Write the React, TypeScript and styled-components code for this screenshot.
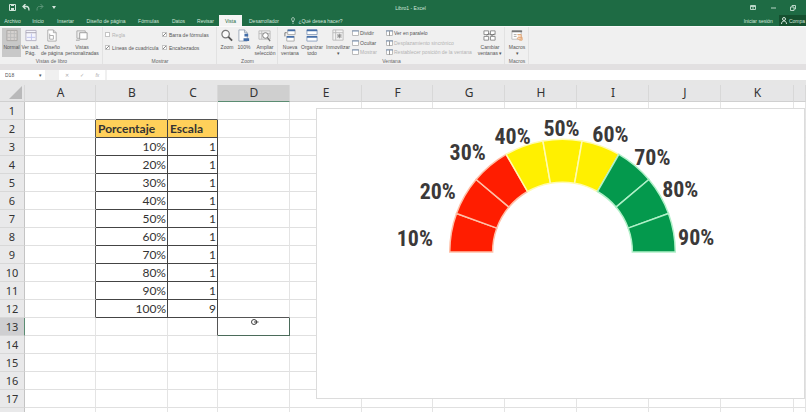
import React from 'react';
import styled, { createGlobalStyle, css } from 'styled-components';

const GlobalStyle = createGlobalStyle`
  * { box-sizing: border-box; }
  body { margin: 0; background: #e6e6e6; font-family: "Liberation Sans", Arial, sans-serif; overflow: hidden; }
  button, input { font: inherit; color: inherit; margin: 0; padding: 0; border: 0; background: none; }
`;

const Window = styled.div`
  display: flex;
  flex-direction: column;
  height: 100vh;
  overflow: hidden;
  font-size: 5px;
  line-height: 6px;
  color: #555;
`;

const TitleBar = styled.header`
  display: grid;
  grid-template-columns: 1fr auto 1fr;
  align-items: center;
  height: 15px;
  padding: 0 8px 0 7px;
  background: #1e6b44;
  color: #d4e6dc;
`;

const DocumentTitle = styled.span`
  padding-left: 16px;
`;

const QuickAccess = styled.div`
  display: flex;
  gap: 4px;
`;

const WindowControls = styled.div`
  display: flex;
  justify-content: flex-end;
  gap: 10px;
`;

const BarButton = styled.button<{ $faded?: boolean }>`
  display: flex;
  width: 10px;
  height: 10px;
  align-items: center;
  justify-content: center;
  opacity: ${p => (p.$faded ? 0.35 : 1)};
`;

const TabBar = styled.nav`
  display: flex;
  height: 11px;
  background: #1e6b44;
  color: #d4e6dc;
`;

const TabList = styled.div`
  display: grid;
  grid-template-columns: 25px 26px 29px 52px 33px 27px 27px 23px 44px 62px;
`;

const Tab = styled.button<{ $active?: boolean }>`
  display: flex;
  align-items: center;
  justify-content: center;
  gap: 3px;
  white-space: nowrap;
  ${p => p.$active && css`background: #f4f4f4; color: #1e6b44;`}
`;

const Account = styled.div`
  display: flex;
  margin-left: auto;
  gap: 6px;
`;

const Share = styled.button`
  display: flex;
  align-items: center;
  gap: 2px;
  padding: 0 1px 0 2px;
  background: #15502f;
  white-space: nowrap;
`;

const Ribbon = styled.section`
  display: flex;
  height: 38px;
  flex: none;
  background: #f0f0f0;
  border-top: 1px solid #fafafa;
`;

const Group = styled.div<{ $width: number }>`
  display: flex;
  flex-direction: column;
  justify-content: space-between;
  width: ${p => p.$width}px;
  padding: 1px 1px 0 2px;
  border-right: 1px solid #e2e2e2;
`;

const GroupBody = styled.div`
  display: flex;
  height: 29px;
`;

const GroupLabel = styled.div`
  text-align: center;
  color: #666;
`;

const Command = styled.button<{ $width: number; $active?: boolean }>`
  display: flex;
  flex: none;
  flex-direction: column;
  align-items: center;
  width: ${p => p.$width}px;
  height: 29px;
  padding-top: 1px;
  background: ${p => (p.$active ? '#c8c8c8' : 'transparent')};
  white-space: pre;

  svg { flex: none; margin-bottom: 2px; }
`;

const CheckGrid = styled.div`
  display: grid;
  grid-template-columns: 57px 50px;
  grid-template-rows: 13px 13px;
  align-items: center;
`;

const CheckLabel = styled.label<{ $off?: boolean }>`
  display: flex;
  align-items: center;
  gap: 2px;
  white-space: nowrap;
  color: ${p => (p.$off ? '#b5b5b5' : '#555')};
`;

const CheckBox = styled.input`
  appearance: none;
  width: 5px;
  height: 5px;
  border: 1px solid #c4c4c4;
  background: #fff;
  &:checked { background: linear-gradient(135deg, #fff 40%, #888 50%, #fff 65%); }
`;

const SmallList = styled.div<{ $width: number }>`
  display: flex;
  flex: none;
  flex-direction: column;
  width: ${p => p.$width}px;
`;

const SmallCommand = styled.button`
  display: flex;
  align-items: center;
  gap: 1px;
  height: 10px;
  white-space: nowrap;
  &:disabled { color: #b3b3b3; }
`;

const RibbonEdge = styled.div`
  height: 6px;
  flex: none;
  background: #e2e0e1;
`;

const FormulaBar = styled.div`
  display: flex;
  flex: none;
  height: 10px;
  background: #f0f0f0;
`;

const NameBox = styled.div`
  display: flex;
  align-items: center;
  width: 45px;
  padding: 0 3px 0 5px;
  background: #fff;
`;

const NameInput = styled.input`
  width: 34px;
`;

const FormulaTools = styled.div`
  display: flex;
  align-items: center;
  justify-content: space-around;
  width: 46px;
  margin: 0 2px 0 14px;
  background: #fff;
  color: #aaa;
`;

const FormulaInput = styled.input`
  flex: 1;
  padding: 0 4px;
  background: #fff;
`;

const Sheet = styled.main`
  position: relative;
  flex: 1;
  padding-top: 5px;
  overflow: hidden;
  background: #e6e6e6;
`;

const Grid = styled.table`
  table-layout: fixed;
  width: 100%;
  border-collapse: separate;
  border-spacing: 0;
  background: #fff;
  font: 12px/16px "Noto Sans", sans-serif;
  color: #333;
`;

const Col = styled.col<{ $width?: number }>`
  width: ${p => (p.$width ? `${p.$width}px` : 'auto')};
`;

const ColumnHead = styled.th<{ $selected?: boolean }>`
  height: 17px;
  padding: 0 0 0 1px;
  border-right: 1px solid #d8d8d8;
  border-bottom: 1px solid ${p => (p.$selected ? '#5b8c72' : '#d0d0d0')};
  background: ${p => (p.$selected ? '#cfcfcf' : '#e6e6e7')};
  font-weight: 400;
`;

const Corner = styled(ColumnHead)`
  text-align: right;
  svg { display: block; margin-left: auto; }
`;

const RowHead = styled.th<{ $selected?: boolean }>`
  height: 18px;
  padding: 0;
  border-right: 1px solid ${p => (p.$selected ? '#5b8c72' : '#c4c4c4')};
  border-bottom: 1px solid #d8d8d8;
  background: ${p => (p.$selected ? '#cfcfd1' : '#e9e9ea')};
  font-size: 11px;
  font-weight: 400;
`;

type CellKind = 'plain' | 'title' | 'value' | 'selected';

const Cell = styled.td<{ $kind: CellKind; $edge?: boolean; $above?: boolean }>`
  height: 18px;
  padding: 0 1px 0 2px;
  border-right: 1px solid #e4e4e4;
  border-bottom: 1px solid #e0e0e0;
  font-family: Lato, sans-serif;
  ${p => (p.$kind === 'title' || p.$kind === 'value') && css`
    border-color: #444;
    text-align: right;
  `}
  ${p => p.$kind === 'title' && css`
    background: #ffd05a;
    font-weight: 700;
    text-align: left;
  `}
  ${p => p.$kind === 'selected' && css`
    border-color: #4b6b5a;
    vertical-align: top;
    svg { display: block; margin: 0 auto; }
  `}
  ${p => p.$edge && css`border-right-color: #555;`}
  ${p => p.$above && css`border-bottom-color: #555;`}
`;

const ChartPanel = styled.figure`
  position: absolute;
  top: 28px;
  left: 316px;
  right: 1px;
  height: 291px;
  margin: 0;
  border: 1px solid #dcdcdc;
  background: #fff;

  svg { display: block; width: 100%; height: 100%; }
`;

const GaugeLabel = styled.text`
  font: 700 22px "Roboto Condensed", Roboto, sans-serif;
  fill: #3b3939;
  text-anchor: middle;
`;

type IconName =
  | 'normal' | 'breaks' | 'page' | 'custom' | 'zoom' | 'hundred' | 'fit'
  | 'newWindow' | 'arrange' | 'freeze' | 'switch' | 'macros';

const iconShapes: Record<IconName, React.ReactNode> = {
  normal: <><path d="M2 1.5h11v11H2z" fill="#d6d2d0" stroke="#aaa6a4" /><path d="M2 5h11M2 9h11M6 2v10M10 2v10" stroke="#bbb" /></>,
  breaks: <><path d="M2 1.5h11v11H2z" fill="#f5f5fc" stroke="#b5b2c2" /><path d="M2 4h11" stroke="#a3a0b0" /><path d="M3 9h9M8 5v7" stroke="#c0c4ee" /></>,
  page: <><path d="M3 1h6l3 3v9H3z" fill="#fff" stroke="#aaa" /><path d="M9 1v3h3M5 5v6M5 7h4v4H5" stroke="#aaa" fill="none" /></>,
  custom: <><path d="M2 2h9v8H2z" fill="#eee" stroke="#aaa" /><path d="M5 4h8v7H5z" fill="#fff" stroke="#999" /><path d="M1 12h4" stroke="#999" /></>,
  zoom: <><circle cx="6" cy="5.5" r="4" fill="#fafafa" stroke="#777" strokeWidth="1.3" /><path d="M9 8.5l4 4" stroke="#555" strokeWidth="2" /></>,
  hundred: <><path d="M2 1h6l3 3v9H2z" fill="#fff" stroke="#9aa8b8" /><path d="M8 5h4v3H8zM7 10h6v3H7z" fill="#456fa9" /><path d="M8 1v3h3" fill="none" stroke="#9aa8b8" /></>,
  fit: <><path d="M1 2h12v9H1zM4 2v9M1 5h12" fill="#eee" stroke="#bbb" /><circle cx="8" cy="7" r="3" fill="#fff" stroke="#777" /><path d="M10 9l3 4" stroke="#777" strokeWidth="1.4" /></>,
  newWindow: <><path d="M5 1h8v5H5zM4 8h8v5H4z" fill="#fff" stroke="#aaa" /><path d="M5 1.5h8M4 8.5h8" stroke="#456fa9" strokeWidth="2" /><path d="M2 8V4h2" fill="none" stroke="#777" /></>,
  arrange: <><path d="M2 1h11v5H2zM2 8h11v5H2z" fill="#fff" stroke="#8aa0bd" /><path d="M2 1.5h11M2 8.5h11" stroke="#456fa9" strokeWidth="2" /></>,
  freeze: <><path d="M2 1h11v11H2zM2 4h11M5 1v11" fill="#f4f4f4" stroke="#bbb" /><path d="M9 5v5M6.5 7.5h5M7 5.5l4 4M11 5.5l-4 4" stroke="#888" /></>,
  switch: <><path d="M1 2h5v4H1zM8 2h5v4H8zM1 8h5v4H1zM8 8h5v4H8z" fill="#fff" stroke="#888" /><path d="M4 7c3-5 5 3 8-2" fill="none" stroke="#666" /></>,
  macros: <><path d="M2 2h10v9H2z" fill="#fff" stroke="#bbb" /><path d="M2 2.5h11" stroke="#777" strokeWidth="2" /><path d="M4 6h3M4 8h3" stroke="#aaa" /><path d="M8 6h4v5H9c-2 0-1-2 0-2h4v3h-3" fill="#fbe5d4" stroke="#e2a36f" /></>,
};

const Icon = ({ name }: { name: IconName }) => (
  <svg width="14" height="13" viewBox="0 0 15 14" aria-hidden="true">{iconShapes[name]}</svg>
);

const WindowGlyph = ({ wide }: { wide?: boolean }) => (
  <svg width="7" height="6" viewBox="0 0 7 6" aria-hidden="true">
    <path d="M.5.5h6v5h-6z" fill="#fff" stroke="#bbb" />
    <path d="M0 1h7" stroke="#7a94b5" />
    {wide && <path d="M3.5 1v5" stroke="#999" />}
  </svg>
);

const columns = [
  ['A', 71], ['B', 72], ['C', 50], ['D', 72], ['E', 72], ['F', 71], ['G', 72],
  ['H', 72], ['I', 72], ['J', 72], ['K', 73], ['', 0],
] as const;

const data: Record<number, [string, string]> = {
  2: ['Porcentaje', 'Escala'], 3: ['10%', '1'], 4: ['20%', '1'], 5: ['30%', '1'],
  6: ['40%', '1'], 7: ['50%', '1'], 8: ['60%', '1'], 9: ['70%', '1'],
  10: ['80%', '1'], 11: ['90%', '1'], 12: ['100%', '9'],
};

const tabs = ['Archivo', 'Inicio', 'Insertar', 'Diseño de página', 'Fórmulas', 'Datos', 'Revisar', 'Vista', 'Desarrollador'];

const CellPointer = () => (
  <svg width="9" height="8" viewBox="0 0 9 8" aria-hidden="true">
    <circle cx="4" cy="4" r="2.5" fill="#fff" stroke="#444" />
    <path d="M4 4h4.5M6.5 2.5v3" stroke="#444" />
  </svg>
);

const SheetCell = ({ row, column }: { row: number; column: string }) => {
  const inTable = column === 'B' || column === 'C';
  if (inTable && data[row]) {
    return <Cell $kind={row === 2 ? 'title' : 'value'}>{data[row][column === 'B' ? 0 : 1]}</Cell>;
  }
  if (column === 'D' && row === 13) {
    return <Cell $kind="selected"><CellPointer /></Cell>;
  }
  return (
    <Cell
      $kind="plain"
      $edge={(column === 'A' && row > 1 && row < 13) || (column === 'C' && row === 13)}
      $above={(inTable && row === 1) || (column === 'D' && row === 12)}
    />
  );
};

const center = { x: 246, y: 143 };
const point = (radius: number, degrees: number) => {
  const a = (degrees * Math.PI) / 180;
  return `${(center.x - radius * Math.cos(a)).toFixed(2)} ${(center.y - radius * Math.sin(a)).toFixed(2)}`;
};
const slicePath = (i: number) =>
  `M${point(113, i * 20)}A113 113 0 0 1 ${point(113, i * 20 + 20)}L${point(70, i * 20 + 20)}A70 70 0 0 0 ${point(70, i * 20)}Z`;

const zones = [
  { fill: '#ff1d00', line: '#ffc0a8' },
  { fill: '#fff000', line: '#fffbb0' },
  { fill: '#04994d', line: '#b0f0c8' },
];

const gaugeLabels: [string, number, number][] = [
  ['10%', 98, 137], ['20%', 121, 90], ['30%', 151, 51], ['40%', 196, 35], ['50%', 245, 27],
  ['60%', 294, 33], ['70%', 336, 56], ['80%', 364, 88], ['90%', 380, 136],
];

const Gauge = () => (
  <svg viewBox="0 0 488 289" role="img" aria-label="Velocímetro">
    {Array.from({ length: 9 }, (_, i) => {
      const zone = zones[Math.floor(i / 3)];
      return <path key={i} d={slicePath(i)} fill={zone.fill} stroke={zone.line} strokeWidth="1.5" />;
    })}
    {gaugeLabels.map(([label, x, y]) => <GaugeLabel key={label} x={x} y={y}>{label}</GaugeLabel>)}
  </svg>
);

export default function App() {
  return (
    <Window>
      <GlobalStyle />
      <TitleBar>
        <QuickAccess>
          <BarButton aria-label="Guardar">
            <svg width="7" height="7" viewBox="0 0 7 7"><path d="M.5.5h6v6h-6z" fill="none" stroke="#d4e6dc" /><path d="M2 4h3v3H2zM2 1h3v1H2z" fill="#d4e6dc" /></svg>
          </BarButton>
          <BarButton aria-label="Deshacer">
            <svg width="8" height="7" viewBox="0 0 8 7"><path d="M3.5 0L1 2.5 3.5 5M1 2.5h3.5c2 0 2.5 1 2.5 4" fill="none" stroke="#d4e6dc" strokeWidth="1.3" /></svg>
          </BarButton>
          <BarButton aria-label="Rehacer" $faded>
            <svg width="8" height="7" viewBox="0 0 8 7"><path d="M4.5 0L7 2.5 4.5 5M7 2.5H3.5C1.5 2.5 1 3.5 1 6.5" fill="none" stroke="#d4e6dc" /></svg>
          </BarButton>
          <BarButton aria-label="Personalizar">
            <svg width="4" height="3" viewBox="0 0 4 3"><path d="M0 0h4L2 3z" fill="#d4e6dc" /></svg>
          </BarButton>
        </QuickAccess>
        <DocumentTitle>Libro1 - Excel</DocumentTitle>
        <WindowControls>
          <BarButton aria-label="Opciones de la cinta">
            <svg width="6" height="5" viewBox="0 0 6 5"><path d="M.5.5h5v4h-5zM0 1.5h6M3 2v2" fill="none" stroke="#b9d6c7" /></svg>
          </BarButton>
          <BarButton aria-label="Minimizar">
            <svg width="5" height="2" viewBox="0 0 5 2"><path d="M0 1h5" stroke="#b9d6c7" /></svg>
          </BarButton>
          <BarButton aria-label="Restaurar">
            <svg width="6" height="6" viewBox="0 0 6 6"><path d="M.5 2h3.5v3.5H.5zM2 2V.5h3.5V4H4" fill="none" stroke="#b9d6c7" /></svg>
          </BarButton>
        </WindowControls>
      </TitleBar>

      <TabBar>
        <TabList>
          {tabs.map(name => <Tab key={name} $active={name === 'Vista'}>{name}</Tab>)}
          <Tab>
            <svg width="4" height="7" viewBox="0 0 4 7" aria-hidden="true"><path d="M1.5 5V4C0 3 .5.5 2 .5S4 3 2.5 4v1zM1.5 6.5h1" fill="none" stroke="#d4e6dc" strokeWidth=".7" /></svg>
            ¿Qué desea hacer?
          </Tab>
        </TabList>
        <Account>
          <Tab>Iniciar sesión</Tab>
          <Share>
            <svg width="6" height="7" viewBox="0 0 6 7" aria-hidden="true"><circle cx="3" cy="2" r="1.5" fill="none" stroke="#d4e6dc" /><path d="M.5 7c0-4 5-4 5 0" fill="none" stroke="#d4e6dc" /></svg>
            Compa
          </Share>
        </Account>
      </TabBar>

      <Ribbon>
        <Group $width={103}>
          <GroupBody>
            <Command $width={19} $active><Icon name="normal" />Normal</Command>
            <Command $width={19}><Icon name="breaks" />{'Ver salt.\nPág.'}</Command>
            <Command $width={24}><Icon name="page" />{'Diseño\nde página'}</Command>
            <Command $width={36}><Icon name="custom" />{'Vistas\npersonalizadas'}</Command>
          </GroupBody>
          <GroupLabel>Vistas de libro</GroupLabel>
        </Group>
        <Group $width={114}>
          <CheckGrid>
            <CheckLabel $off><CheckBox type="checkbox" disabled />Regla</CheckLabel>
            <CheckLabel><CheckBox type="checkbox" defaultChecked />Barra de fórmulas</CheckLabel>
            <CheckLabel><CheckBox type="checkbox" defaultChecked />Líneas de cuadrícula</CheckLabel>
            <CheckLabel><CheckBox type="checkbox" defaultChecked />Encabezados</CheckLabel>
          </CheckGrid>
          <GroupLabel>Mostrar</GroupLabel>
        </Group>
        <Group $width={61}>
          <GroupBody>
            <Command $width={16}><Icon name="zoom" />Zoom</Command>
            <Command $width={18}><Icon name="hundred" />100%</Command>
            <Command $width={24}><Icon name="fit" />{'Ampliar\nselección'}</Command>
          </GroupBody>
          <GroupLabel>Zoom</GroupLabel>
        </Group>
        <Group $width={227}>
          <GroupBody>
            <Command $width={20}><Icon name="newWindow" />{'Nueva\nventana'}</Command>
            <Command $width={24}><Icon name="arrange" />{'Organizar\ntodo'}</Command>
            <Command $width={28}><Icon name="freeze" />{'Inmovilizar\n▾'}</Command>
            <SmallList $width={34}>
              <SmallCommand><WindowGlyph />Dividir</SmallCommand>
              <SmallCommand><WindowGlyph />Ocultar</SmallCommand>
              <SmallCommand disabled><WindowGlyph />Mostrar</SmallCommand>
            </SmallList>
            <SmallList $width={92}>
              <SmallCommand><WindowGlyph wide />Ver en paralelo</SmallCommand>
              <SmallCommand disabled><WindowGlyph wide />Desplazamiento sincrónico</SmallCommand>
              <SmallCommand disabled><WindowGlyph wide />Restablecer posición de la ventana</SmallCommand>
            </SmallList>
            <Command $width={24}><Icon name="switch" />{'Cambiar\nventanas ▾'}</Command>
          </GroupBody>
          <GroupLabel>Ventana</GroupLabel>
        </Group>
        <Group $width={24}>
          <GroupBody>
            <Command $width={20}><Icon name="macros" />{'Macros\n▾'}</Command>
          </GroupBody>
          <GroupLabel>Macros</GroupLabel>
        </Group>
      </Ribbon>
      <RibbonEdge />

      <FormulaBar>
        <NameBox><NameInput aria-label="Cuadro de nombres" defaultValue="D18" />▾</NameBox>
        <FormulaTools><span>✕</span><span>✓</span><i>fx</i></FormulaTools>
        <FormulaInput aria-label="Barra de fórmulas" />
      </FormulaBar>

      <Sheet>
        <Grid>
          <colgroup>
            <Col $width={25} />
            {columns.map(([name, width]) => <Col key={name} $width={width} />)}
          </colgroup>
          <thead>
            <tr>
              <Corner>
                <svg width="15" height="14" viewBox="0 0 15 14" aria-hidden="true"><path d="M13 0v13H0z" fill="#b9b9ba" /></svg>
              </Corner>
              {columns.map(([name]) => <ColumnHead key={name} $selected={name === 'D'}>{name}</ColumnHead>)}
            </tr>
          </thead>
          <tbody>
            {Array.from({ length: 18 }, (_, i) => i + 1).map(row => (
              <tr key={row}>
                <RowHead $selected={row === 13}>{row}</RowHead>
                {columns.map(([name]) => <SheetCell key={name} row={row} column={name} />)}
              </tr>
            ))}
          </tbody>
        </Grid>
        <ChartPanel><Gauge /></ChartPanel>
      </Sheet>
    </Window>
  );
}
